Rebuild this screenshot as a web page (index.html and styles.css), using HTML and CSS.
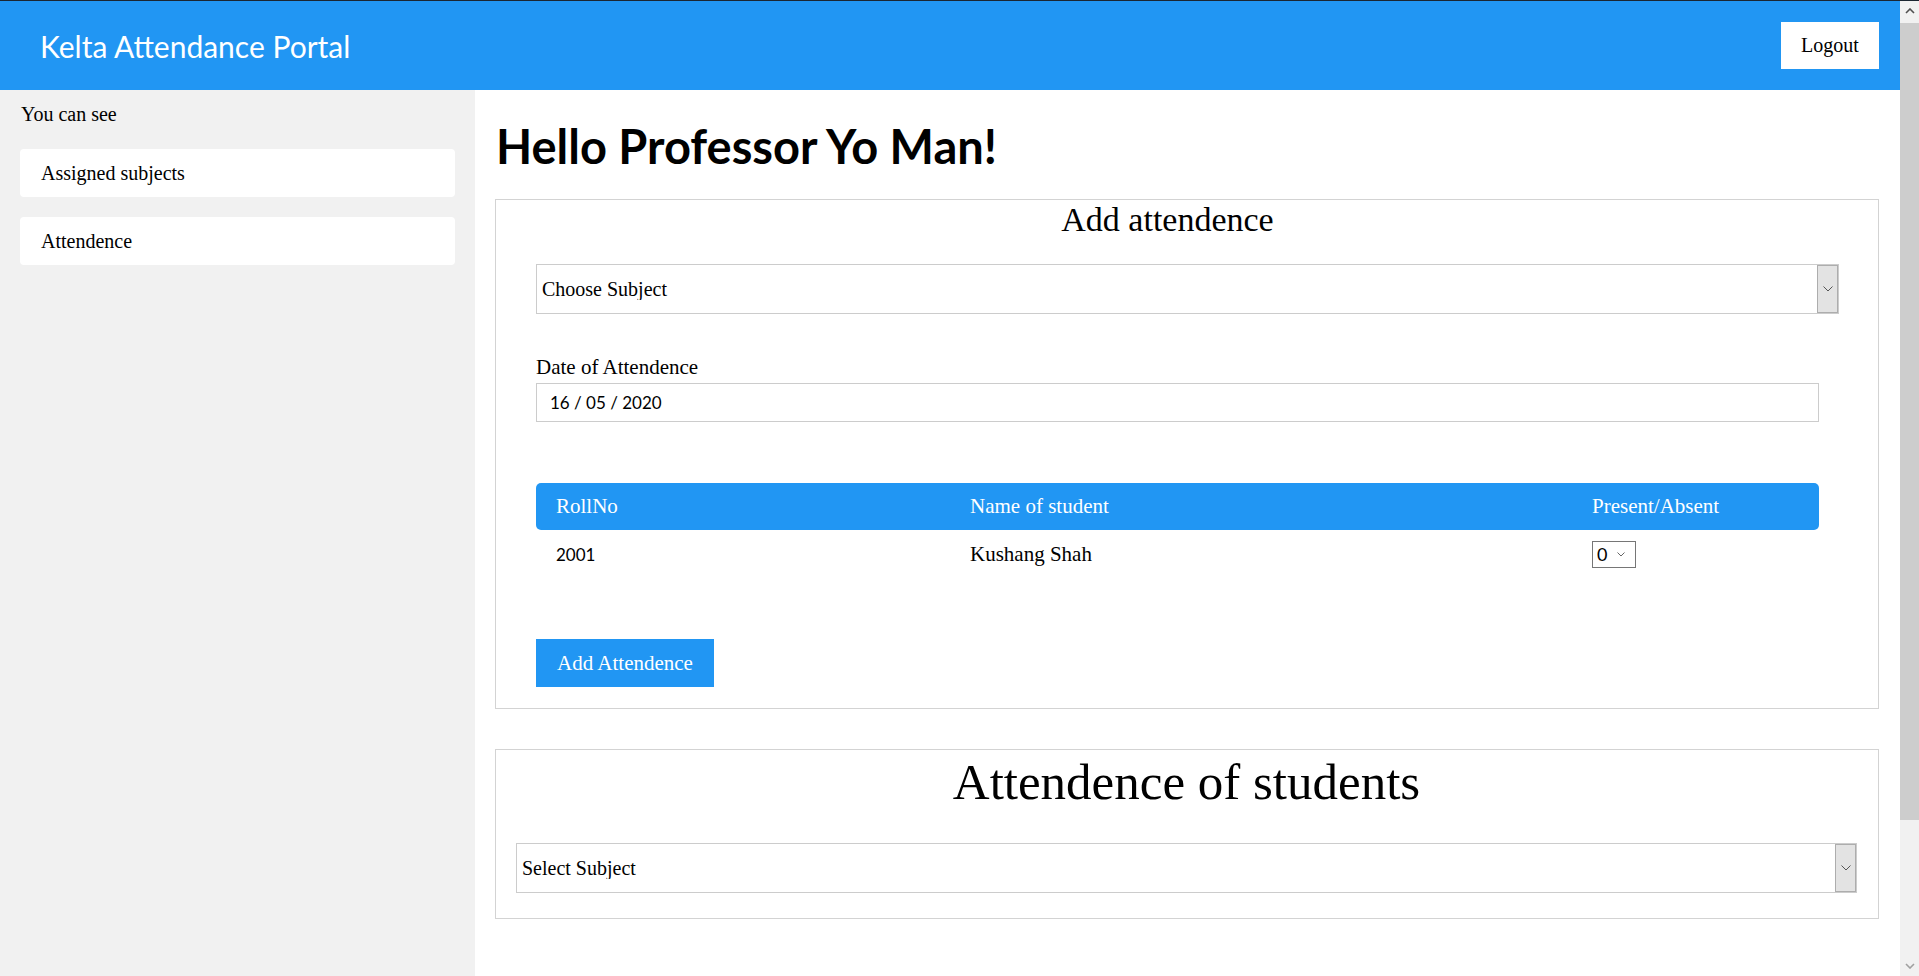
FILE: index.html
```html
<!DOCTYPE html>
<html lang="en">
<head>
<meta charset="utf-8">
<title>Kelta Attendance Portal</title>
<link rel="stylesheet" href="styles.css">
</head>
<body>
<header class="topbar">
  <div class="brand">Kelta Attendance Portal</div>
  <button class="logout">Logout</button>
</header>
<div class="layout">
  <aside class="sidebar">
    <p class="side-label">You can see</p>
    <a class="side-item" href="#">Assigned subjects</a>
    <a class="side-item" href="#">Attendence</a>
  </aside>
  <main class="main">
    <h1 class="hello">Hello Professor Yo Man!</h1>
    <section class="card card-add">
      <h2 class="card-title">Add attendence</h2>
      <div class="form">
        <div class="select-box wide">
          <select class="select"><option>Choose Subject</option></select>
          <span class="select-btn"><svg width="10" height="6" viewBox="0 0 10 6"><path d="M0.5 0.5 L5 5 L9.5 0.5" fill="none" stroke="#555" stroke-width="1"/></svg></span>
        </div>
        <label class="date-label">Date of Attendence</label>
        <input class="date-input" type="text" value="16 / 05 / 2020">
        <div class="table">
          <div class="thead">
            <div class="cell">RollNo</div>
            <div class="cell">Name of student</div>
            <div class="cell">Present/Absent</div>
          </div>
          <div class="trow">
            <div class="cell num">2001</div>
            <div class="cell">Kushang Shah</div>
            <div class="cell"><span class="mini-select"><select class="mini"><option>0</option></select><svg width="8" height="5" viewBox="0 0 8 5"><path d="M0.5 0.5 L4 4 L7.5 0.5" fill="none" stroke="#666" stroke-width="1"/></svg></span></div>
          </div>
        </div>
        <button class="add-btn">Add Attendence</button>
      </div>
    </section>
    <section class="card card-list">
      <h2 class="big-title">Attendence of students</h2>
      <div class="select-box">
        <select class="select"><option>Select Subject</option></select>
        <span class="select-btn"><svg width="10" height="6" viewBox="0 0 10 6"><path d="M0.5 0.5 L5 5 L9.5 0.5" fill="none" stroke="#555" stroke-width="1"/></svg></span>
      </div>
    </section>
  </main>
</div>
<div class="scrollbar" aria-hidden="true">
  <div class="sb-btn"><svg width="10" height="6" viewBox="0 0 10 6"><path d="M1 5 L5 1 L9 5" fill="none" stroke="#505050" stroke-width="1.6"/></svg></div>
  <div class="sb-track"><div class="sb-thumb"></div></div>
  <div class="sb-btn"><svg width="10" height="6" viewBox="0 0 10 6"><path d="M1 1 L5 5 L9 1" fill="none" stroke="#a0a0a0" stroke-width="1.6"/></svg></div>
</div>
</body>
</html>
```
FILE: styles.css
```css
html, body {
  margin: 0;
  padding: 0;
}
body {
  font-family: "Liberation Serif", serif;
  font-size: 20px;
  color: #000;
  background: #fff;
  padding-right: 19px;
}
::-webkit-scrollbar { width: 0; height: 0; }

.scrollbar {
  position: fixed;
  top: 0;
  right: 0;
  width: 19px;
  height: 100vh;
  box-sizing: border-box;
  border-top: 1px solid #1b2631;
  background: #f1f1f1;
  display: flex;
  flex-direction: column;
}
.sb-btn {
  height: 20px;
  flex: none;
  display: flex;
  align-items: center;
  justify-content: center;
}
.sb-track {
  flex: 1;
  padding-top: 2px;
}
.sb-thumb {
  height: 797px;
  background: #cdcdcd;
}

.topbar {
  height: 89px;
  border-top: 1px solid #1b2631;
  background: #2196f3;
  display: flex;
  align-items: center;
  justify-content: space-between;
  padding: 0 21px 0 40px;
}
.brand {
  font-family: "Lato", sans-serif;
  font-size: 30px;
  color: #fff;
}
.logout {
  width: 98px;
  height: 47px;
  background: #fff;
  border: none;
  font-family: "Liberation Serif", serif;
  font-size: 20px;
  color: #000;
  padding: 0;
}
.layout {
  display: flex;
  min-height: 886px;
}
.sidebar {
  width: 475px;
  flex: none;
  box-sizing: border-box;
  background: #f1f1f1;
  padding: 12px 20px;
}
.side-label {
  margin: 0 0 23px 1px;
  line-height: 24px;
}
.side-item {
  display: block;
  height: 48px;
  line-height: 48px;
  padding-left: 21px;
  margin-bottom: 20px;
  background: #fff;
  border-radius: 4px;
  color: #000;
  text-decoration: none;
}
.main {
  flex: 1;
  padding: 0 21px 60px 20px;
}
.hello {
  font-family: "Lato", sans-serif;
  font-weight: 700;
  font-size: 47px;
  line-height: 56px;
  margin: 28px 0 25px 1px;
}
.card {
  border: 1px solid #d3d3d3;
}
.card-add {
  padding: 0 39px 21px 0;
}
.card-title {
  margin: 0;
  font-weight: 400;
  font-size: 34px;
  line-height: 40px;
  text-align: center;
}
.form {
  margin-left: 40px;
  padding-top: 24px;
}
.select-box {
  display: flex;
  height: 50px;
  box-sizing: border-box;
  border: 1px solid #cccccc;
  background: #fff;
}
.select {
  flex: 1;
  appearance: none;
  -webkit-appearance: none;
  border: none;
  background: transparent;
  font-family: "Liberation Serif", serif;
  font-size: 20px;
  color: #000;
  padding: 0 0 0 5px;
  outline: none;
}
.select-btn {
  width: 19px;
  border: 1px solid #adadad;
  background: #e3e3e3;
  display: flex;
  align-items: center;
  justify-content: center;
}
.date-label {
  display: block;
  font-size: 21px;
  line-height: 24px;
  margin-top: 41px;
}
.date-input {
  display: block;
  box-sizing: border-box;
  width: calc(100% - 20px);
  height: 39px;
  margin-top: 4px;
  border: 1px solid #cccccc;
  padding: 0 13px;
  font-family: "Lato", sans-serif;
  font-size: 17px;
  color: #000;
  outline: none;
}
.table {
  margin: 61px 20px 0 0;
  font-size: 21px;
}
.thead, .trow {
  display: grid;
  grid-template-columns: 414px 622px 1fr;
  align-items: center;
}
.thead {
  height: 47px;
  background: #2196f3;
  color: #fff;
  border-radius: 5px;
}
.trow {
  height: 48px;
}
.cell {
  padding-left: 20px;
}
.num {
  font-family: "Lato", sans-serif;
  font-size: 17px;
}
.mini-select {
  display: inline-flex;
  align-items: center;
  height: 25px;
  width: 42px;
  border: 1px solid #767676;
  background: #fff;
  gap: 6px;
  vertical-align: middle;
}
.mini {
  appearance: none;
  -webkit-appearance: none;
  border: none;
  background: transparent;
  font-family: "Lato", sans-serif;
  font-size: 18px;
  padding: 0 0 0 4px;
  width: 18px;
  outline: none;
  color: #000;
}
.add-btn {
  display: block;
  margin-top: 61px;
  width: 178px;
  height: 48px;
  border: none;
  background: #2196f3;
  color: #fff;
  font-family: "Liberation Serif", serif;
  font-size: 21px;
  padding: 0;
}
.card-list {
  margin-top: 40px;
  padding: 0 21px 25px 20px;
}
.big-title {
  margin: 2px 0 31px;
  font-weight: 400;
  font-size: 51px;
  line-height: 60px;
  text-align: center;
}
```
